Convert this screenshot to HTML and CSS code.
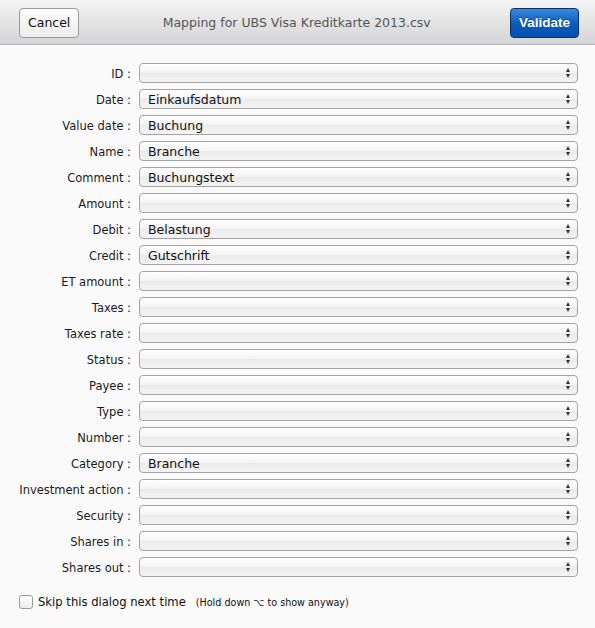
FILE: index.html
```html
<!DOCTYPE html>
<html>
<head>
<meta charset="utf-8">
<link rel="stylesheet" href="styles.css">
</head>
<body>
<div class="toolbar">
  <button class="btn">Cancel</button>
  <div class="title">Mapping for UBS Visa Kreditkarte 2013.csv</div>
  <button class="btn primary">Validate</button>
</div>
<div class="form">
  <label class="lbl">ID :</label><div class="sel"><span></span><i class="arr"></i></div>
  <label class="lbl">Date :</label><div class="sel"><span>Einkaufsdatum</span><i class="arr"></i></div>
  <label class="lbl">Value date :</label><div class="sel"><span>Buchung</span><i class="arr"></i></div>
  <label class="lbl">Name :</label><div class="sel"><span>Branche</span><i class="arr"></i></div>
  <label class="lbl">Comment :</label><div class="sel"><span>Buchungstext</span><i class="arr"></i></div>
  <label class="lbl">Amount :</label><div class="sel"><span></span><i class="arr"></i></div>
  <label class="lbl">Debit :</label><div class="sel"><span>Belastung</span><i class="arr"></i></div>
  <label class="lbl">Credit :</label><div class="sel"><span>Gutschrift</span><i class="arr"></i></div>
  <label class="lbl">ET amount :</label><div class="sel"><span></span><i class="arr"></i></div>
  <label class="lbl">Taxes :</label><div class="sel"><span></span><i class="arr"></i></div>
  <label class="lbl">Taxes rate :</label><div class="sel"><span></span><i class="arr"></i></div>
  <label class="lbl">Status :</label><div class="sel"><span></span><i class="arr"></i></div>
  <label class="lbl">Payee :</label><div class="sel"><span></span><i class="arr"></i></div>
  <label class="lbl">Type :</label><div class="sel"><span></span><i class="arr"></i></div>
  <label class="lbl">Number :</label><div class="sel"><span></span><i class="arr"></i></div>
  <label class="lbl">Category :</label><div class="sel"><span>Branche</span><i class="arr"></i></div>
  <label class="lbl">Investment action :</label><div class="sel"><span></span><i class="arr"></i></div>
  <label class="lbl">Security :</label><div class="sel"><span></span><i class="arr"></i></div>
  <label class="lbl">Shares in :</label><div class="sel"><span></span><i class="arr"></i></div>
  <label class="lbl">Shares out :</label><div class="sel"><span></span><i class="arr"></i></div>
</div>
<div class="skip">
  <span class="cb"></span>
  <span class="skip-text">Skip this dialog next time</span>
  <span class="hint">(Hold down ⌥ to show anyway)</span>
</div>
</body>
</html>
```
FILE: styles.css
```css
html, body {
  margin: 0;
  padding: 0;
  background: #fafafa;
  font-family: "DejaVu Sans", "Liberation Sans", sans-serif;
  color: #222;
}
.toolbar {
  height: 44px;
  border-bottom: 1px solid #b4b4b6;
  background: linear-gradient(#f4f4f4, #d4d4d6);
  display: flex;
  align-items: center;
  justify-content: space-between;
  padding: 0 16px 0 19px;
  box-sizing: content-box;
}
.btn {
  height: 30px;
  margin-top: 1px;
  padding: 0 8px;
  border: 1px solid #9a9a9a;
  border-radius: 4px;
  background: linear-gradient(#fdfdfd, #ececec);
  font-family: "DejaVu Sans", sans-serif;
  font-size: 12.5px;
  color: #111;
}
.btn.primary {
  width: 69px;
  border-color: #0e2f5e;
  background: linear-gradient(#3a8ae0, #0a5ab9 55%, #0552b0);
  color: #fff;
  font-family: "Liberation Sans", sans-serif;
  font-weight: bold;
  font-size: 13.5px;
  text-shadow: 0 -1px 0 rgba(0, 0, 0, 0.35);
  padding: 0;
}
.title {
  font-size: 12.5px;
  color: #555;
  margin-left: 4px;
}
.form {
  display: grid;
  grid-template-columns: 131px 439px;
  grid-auto-rows: 20px;
  column-gap: 8px;
  row-gap: 6px;
  padding-top: 18px;
}
.lbl {
  font-size: 11.5px;
  text-align: right;
  line-height: 22px;
  color: #1a1a1a;
}
.sel {
  height: 18px;
  border: 1px solid #a3a3a3;
  border-radius: 4px;
  background: linear-gradient(#ffffff, #f3f3f3 50%, #ebebeb 51%, #f4f4f4);
  display: flex;
  align-items: center;
  padding-left: 8px;
  position: relative;
  font-size: 12.5px;
  color: #111;
}
.sel span {
  flex: 1;
}
.arr {
  width: 5px;
  height: 10px;
  margin-right: 6px;
  position: relative;
}
.arr::before, .arr::after {
  content: "";
  position: absolute;
  left: 0;
  border-left: 2.5px solid transparent;
  border-right: 2.5px solid transparent;
}
.arr::before {
  top: 0;
  border-bottom: 4px solid #333;
}
.arr::after {
  bottom: 0;
  border-top: 4px solid #333;
}
.skip {
  display: flex;
  align-items: center;
  padding: 18px 0 0 19px;
}
.cb {
  width: 12px;
  height: 12px;
  border: 1px solid #9a9a9a;
  border-radius: 3px;
  background: linear-gradient(#fff, #ececec);
  margin-right: 5px;
}
.skip-text {
  font-size: 11.6px;
  color: #111;
}
.hint {
  font-size: 9.6px;
  margin-left: 10px;
  color: #111;
}
```
